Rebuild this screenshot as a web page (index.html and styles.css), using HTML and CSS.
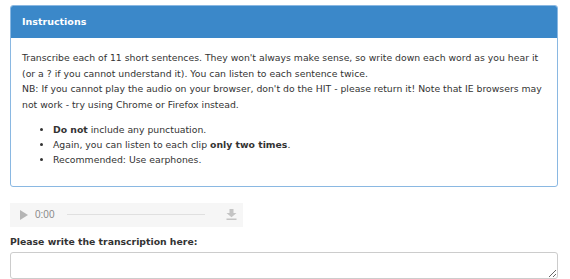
FILE: index.html
```html
<!DOCTYPE html>
<html>
<head>
<meta charset="utf-8">
<link rel="stylesheet" href="styles.css">
</head>
<body>
<section class="panel">
  <div class="panel-heading">Instructions</div>
  <div class="panel-body">
    <p>Transcribe each of 11 short sentences. They won't always make sense, so write down each word as you hear it (or a ? if you cannot understand it). You can listen to each sentence twice.<br>NB: If you cannot play the audio on your browser, don't do the HIT - please return it! Note that IE browsers may not work - try using Chrome or Firefox instead.</p>
    <ul>
      <li><b>Do not</b> include any punctuation.</li>
      <li>Again, you can listen to each clip <b>only two times</b>.</li>
      <li>Recommended: Use earphones.</li>
    </ul>
  </div>
</section>
<div class="player">
  <svg class="play" width="8" height="10" viewBox="0 0 8 10"><path d="M0 0 L8 5 L0 10 Z" fill="#b5b5b5"/></svg>
  <span class="time">0:00</span>
  <span class="track"></span>
  <svg class="dl" width="11" height="11" viewBox="0 0 11 11"><path d="M3.5 0 H7.5 V4 H10.5 L5.5 8.3 L0.5 4 H3.5 Z" fill="#c4c4c4"/><rect x="0.5" y="9.5" width="10" height="1.5" fill="#c4c4c4"/></svg>
</div>
<label class="label" for="t">Please write the transcription here:</label>
<textarea id="t" class="answer"></textarea>
</body>
</html>
```
FILE: styles.css
```css
html, body {
  margin: 0;
  padding: 0;
  background: #fff;
}
body {
  padding: 5px 12px 0 10px;
  font-family: "DejaVu Sans", Verdana, sans-serif;
  font-size: 9.3px;
  line-height: 15.5px;
  color: #333;
}
.panel {
  border: 1px solid #8ab8e2;
  border-radius: 3px;
  background: #fff;
}
.panel-heading {
  background: #3b88c9;
  color: #fff;
  font-weight: bold;
  font-size: 9.5px;
  padding: 8px 11px 8.5px;
  border-radius: 2px 2px 0 0;
}
.panel-body {
  padding: 12px 11px 11px;
}
.panel-body p {
  margin: 0 0 9.5px;
}
.panel-body ul {
  margin: 0 0 8px;
  padding-left: 31px;
}
.panel-body li {
  line-height: 15px;
}
.player {
  margin-top: 16px;
  width: 233px;
  height: 24px;
  background: #f6f6f6;
  display: flex;
  align-items: center;
  padding: 0 0 0 10px;
  box-sizing: border-box;
}
.play {
  display: block;
}
.time {
  margin-left: 7px;
  color: #8a8a8a;
  font-family: "Liberation Sans", Arial, sans-serif;
  font-size: 10px;
}
.track {
  margin-left: 13px;
  width: 138px;
  height: 1px;
  background: #e0e0e0;
}
.dl {
  margin-left: 21px;
  display: block;
}
.label {
  display: block;
  font-weight: bold;
  margin-top: 7px;
  margin-bottom: 3px;
}
.answer {
  display: block;
  width: 548px;
  height: 27px;
  box-sizing: border-box;
  border: 1px solid #ccc;
  border-radius: 3px;
  margin: 0;
  padding: 4px 8px;
  font-family: inherit;
  font-size: inherit;
}
```
